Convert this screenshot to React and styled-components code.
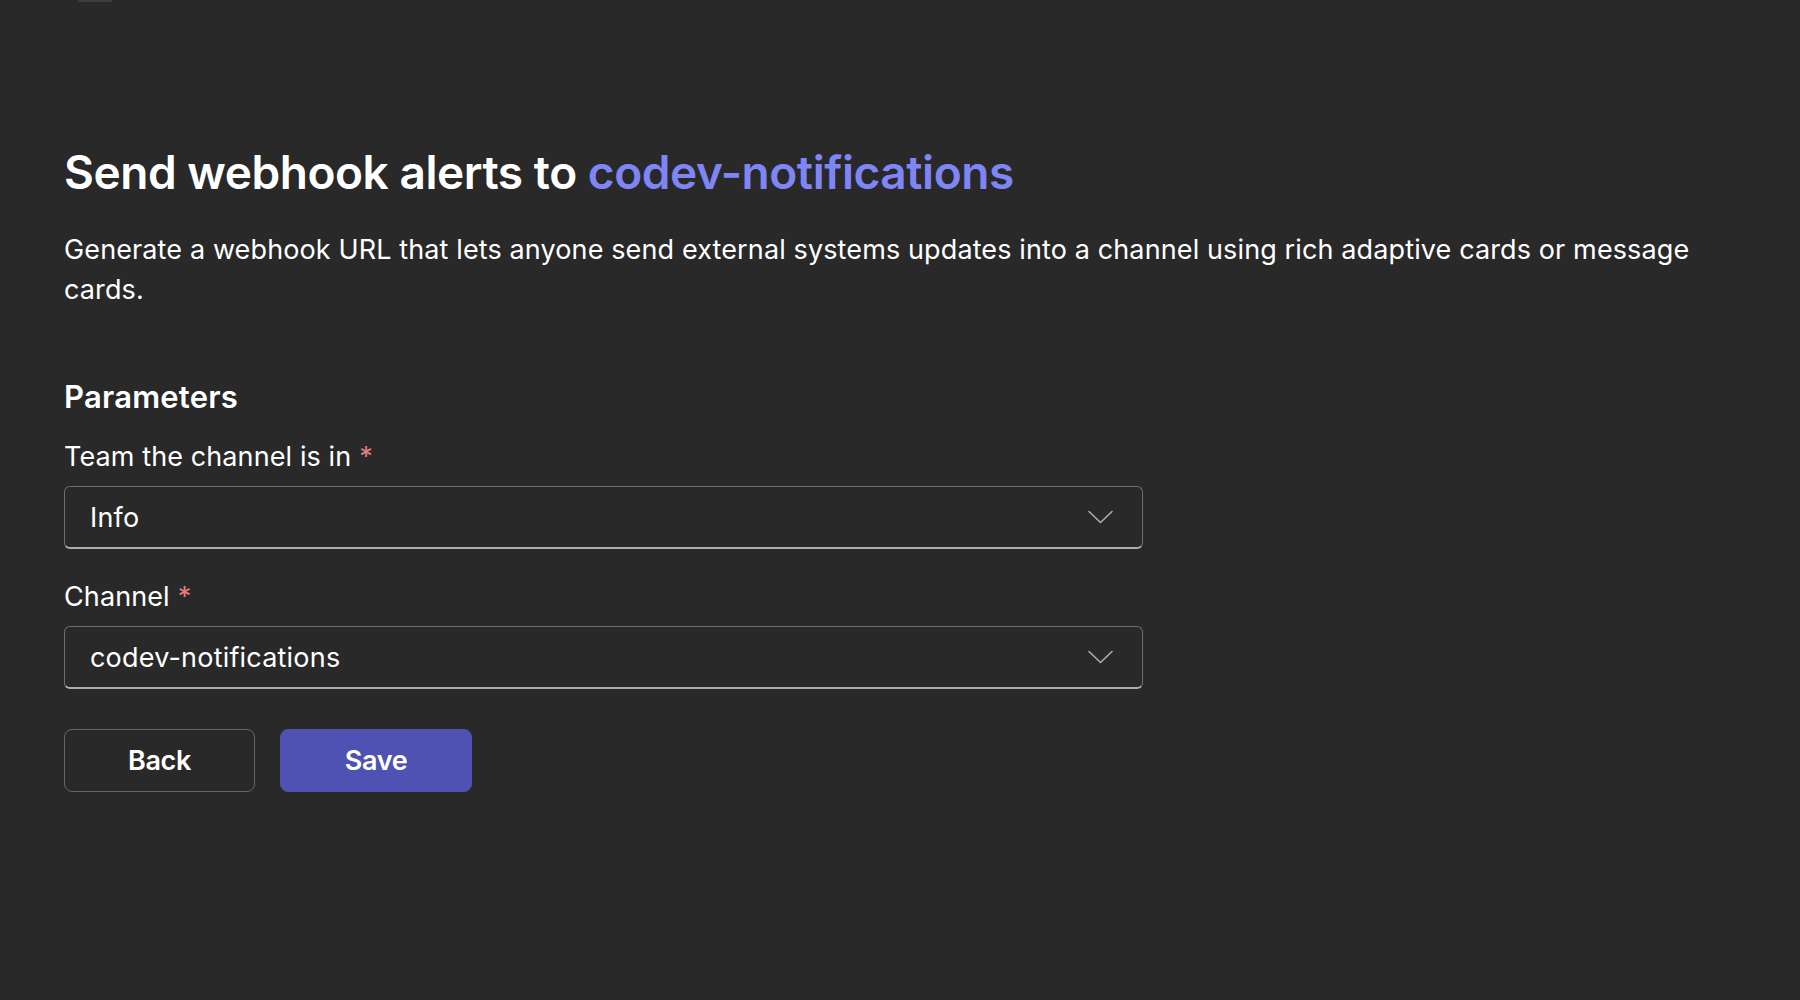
import React from 'react';
import styled, { createGlobalStyle } from 'styled-components';

const GlobalStyle = createGlobalStyle`
  html, body {
    margin: 0;
    padding: 0;
    background: #292929;
  }

  body {
    font-family: Inter, "Noto Sans", "Liberation Sans", sans-serif;
    color: #ffffff;
    -webkit-font-smoothing: antialiased;
  }
`;

const Page = styled.div`
  min-height: 1000px;
  background: #292929;
  padding: 0 64px;
  box-sizing: border-box;
`;

const TopStrip = styled.div`
  height: 2px;
  display: flex;
  padding-left: 14px;
`;

const TabStub = styled.div`
  width: 34px;
  height: 2px;
  background: #3d3d3d;
`;

const Title = styled.h1`
  margin: 140px 0 0;
  font-size: 46px;
  line-height: 60px;
  font-weight: 600;
  letter-spacing: -0.45px;
`;

const Accent = styled.span`
  color: #7f85f5;
`;

const Description = styled.p`
  margin: 28px 0 0;
  font-size: 27px;
  line-height: 40px;
  font-weight: 400;
  letter-spacing: 0.12px;
`;

const SectionTitle = styled.h2`
  margin: 67px 0 0;
  font-size: 31px;
  line-height: 40px;
  font-weight: 600;
  letter-spacing: 0.2px;
`;

const Form = styled.div`
  width: 1079px;
  display: flex;
  flex-direction: column;
`;

const Field = styled.div`
  display: flex;
  flex-direction: column;
  gap: 11px;
  margin-top: ${(p) => p.$gap}px;
`;

const Label = styled.label`
  font-size: 27px;
  line-height: 36px;
  letter-spacing: 0.1px;
`;

const Required = styled.span`
  color: #e37d80;
  margin-left: 8px;
`;

const Select = styled.div`
  height: 63px;
  box-sizing: border-box;
  border: 1px solid #6e6e6e;
  border-bottom: 2px solid #adadad;
  border-radius: 6px;
  display: flex;
  align-items: center;
  justify-content: space-between;
  padding: 0 29px 0 25px;
  font-size: 27px;
  letter-spacing: 0.2px;
  cursor: pointer;
`;

const Chevron = () => (
  <svg width="25" height="14" viewBox="0 0 25 14" fill="none">
    <path d="M1 1.5L12.5 12.5L24 1.5" stroke="#adadad" strokeWidth="1.6" strokeLinecap="round" strokeLinejoin="round" />
  </svg>
);

const Actions = styled.div`
  display: flex;
  gap: 25px;
  margin-top: 40px;
`;

const Button = styled.button`
  width: ${(p) => (p.$primary ? 192 : 191)}px;
  height: 63px;
  box-sizing: border-box;
  border-radius: 8px;
  border: 1px solid ${(p) => (p.$primary ? '#4f52b2' : '#666666')};
  background: ${(p) => (p.$primary ? '#4f52b2' : 'transparent')};
  color: #ffffff;
  font-family: inherit;
  font-size: 27px;
  font-weight: 600;
  letter-spacing: -0.3px;
  cursor: pointer;
`;

const SelectField = ({ label, value, gap }) => (
  <Field $gap={gap}>
    <Label>
      {label}
      <Required>*</Required>
    </Label>
    <Select>
      <span>{value}</span>
      <Chevron />
    </Select>
  </Field>
);

export default function App() {
  return (
    <>
      <GlobalStyle />
      <Page>
        <TopStrip>
          <TabStub />
        </TopStrip>
        <Title>
          Send webhook alerts to <Accent>codev-notifications</Accent>
        </Title>
        <Description>
          Generate a webhook URL that lets anyone send external systems updates into a channel using rich adaptive cards or message cards.
        </Description>
        <SectionTitle>Parameters</SectionTitle>
        <Form>
          <SelectField label="Team the channel is in" value="Info" gap={22} />
          <SelectField label="Channel" value="codev-notifications" gap={30} />
          <Actions>
            <Button>Back</Button>
            <Button $primary>Save</Button>
          </Actions>
        </Form>
      </Page>
    </>
  );
}
